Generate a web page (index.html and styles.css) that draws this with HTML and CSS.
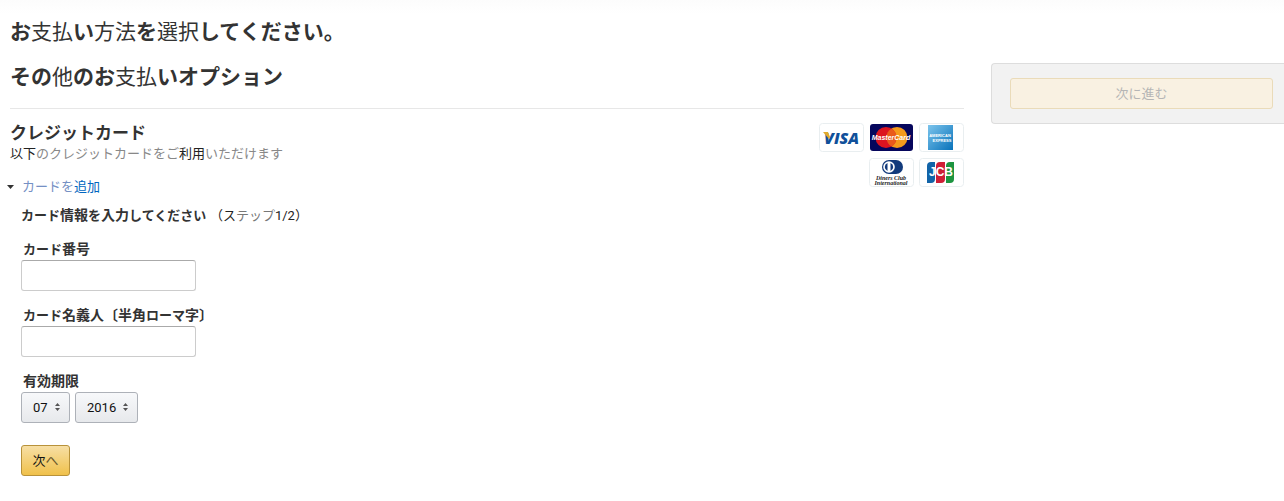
FILE: index.html
```html
<!DOCTYPE html>
<html lang="ja">
<head>
<meta charset="utf-8">
<title>お支払い方法</title>
<link rel="stylesheet" href="styles.css">
</head>
<body>
<div class="page">
  <main class="main">
    <h1 class="title">お<span class="kanji">支払</span>い<span class="kanji">方法</span>を<span class="kanji">選択</span>してください。</h1>
    <h2 class="title title-sub">その<span class="kanji">他</span>のお<span class="kanji">支払</span>いオプション</h2>
    <section class="credit">
      <header class="credit-head">
        <div class="credit-text">
          <h3 class="credit-title">クレジットカード</h3>
          <p class="note"><span class="dark">以下</span>のクレジットカードをご<span class="dark">利用</span>いただけます</p>
        </div>
        <div class="brands">
          <svg class="brand" viewBox="0 0 45 29" role="img" aria-label="VISA">
            <rect class="brand-frame" x=".5" y=".5" width="44" height="28" rx="3"/>
            <text class="visa" x="5" y="21">VISA</text>
            <path d="M4 9h5l2 5-1 2z" fill="#e0a92c"/>
          </svg>
          <svg class="brand" viewBox="0 0 45 29" role="img" aria-label="MasterCard">
            <rect x="1" y="1" width="43" height="27" rx="3" fill="#06065c"/>
            <circle cx="28" cy="14.500" r="10.500" fill="#f59a1c"/>
            <circle cx="17" cy="14.500" r="10.500" fill="#dc1420"/>
            <path d="M22.500 5.500a10.500 10.500 0 0 1 0 18a10.500 10.500 0 0 1 0-18" fill="#e95a1c"/>
            <text class="mastercard" x="22" y="17" text-anchor="middle">MasterCard</text>
          </svg>
          <svg class="brand" viewBox="0 0 45 29" role="img" aria-label="American Express">
            <defs><linearGradient id="amex" x1="0" y1="0" x2="1" y2="1"><stop offset="0" stop-color="#7cc4ec"/><stop offset="1" stop-color="#0872ba"/></linearGradient></defs>
            <rect class="brand-frame" x=".5" y=".5" width="44" height="28" rx="3"/>
            <rect x="9" y="2" width="25" height="25" fill="url(#amex)"/>
            <text class="amex" x="21" y="14" text-anchor="middle">AMERICAN</text>
            <text class="amex" x="23" y="19" text-anchor="middle">EXPRESS</text>
          </svg>
          <svg class="brand" viewBox="0 0 45 29" role="img" aria-label="Diners Club International">
            <rect class="brand-frame" x=".5" y=".5" width="44" height="28" rx="3"/>
            <path d="M20 2h7a7 7 0 0 1 0 14h-7z" fill="#123a7c"/>
            <circle cx="20" cy="9" r="7" fill="#123a7c"/>
            <circle cx="20" cy="9" r="5.800" fill="#fff"/>
            <path d="M18.500 5a4.300 4.300 0 0 0 0 8zM21.500 5a4.300 4.300 0 0 1 0 8z" fill="#123a7c"/>
            <text class="diners" x="22" y="22" text-anchor="middle">Diners Club</text>
            <text class="diners" x="22" y="27" text-anchor="middle">International</text>
          </svg>
          <svg class="brand" viewBox="0 0 45 29" role="img" aria-label="JCB">
            <rect class="brand-frame" x=".5" y=".5" width="44" height="28" rx="3"/>
            <path d="M12 4h4v17q0 4-4 4H8V8q0-4 4-4z" fill="#1264a8"/>
            <path d="M21 4h5v17q0 4-4 4h-5V8q0-4 4-4z" fill="#cf1f36"/>
            <path d="M31 4h4v17q0 4-4 4h-4V8q0-4 4-4z" fill="#1d9440"/>
            <text class="jcb" x="22" y="18" text-anchor="middle">JCB</text>
          </svg>
        </div>
      </header>
      <div class="add">
        <svg class="caret" viewBox="0 0 7 4" aria-hidden="true"><path d="M0 0h7L3.500 4z"/></svg>
        <a class="link" href="#card-form">カードを<span class="link-strong">追加</span></a>
      </div>
      <form class="form" id="card-form">
        <p class="step"><strong class="step-text">カード<span class="wide">情報</span>を<span class="wide">入力</span>してください</strong> <span>（ス<span class="faint">テップ</span><span class="digits">1/2</span>）</span></p>
        <div class="field">
          <label class="label" for="number">カード<span class="wide">番号</span></label>
          <input class="input" id="number" type="text">
        </div>
        <div class="field">
          <label class="label" for="holder">カード<span class="wide">名義人〔半角</span>ローマ<span class="wide">字〕</span></label>
          <input class="input" id="holder" type="text">
        </div>
        <div class="field">
          <label class="label" for="month"><span class="wide">有効期限</span></label>
          <div class="selects">
            <span class="select-box">
              <select class="select select-month" id="month"><option>07</option></select>
              <svg class="arrows" viewBox="0 0 5 8" aria-hidden="true"><path d="M0 3h5L2.500 0zM0 5h5L2.500 8z"/></svg>
            </span>
            <span class="select-box">
              <select class="select select-year" aria-label="年"><option>2016</option></select>
              <svg class="arrows" viewBox="0 0 5 8" aria-hidden="true"><path d="M0 3h5L2.500 0zM0 5h5L2.500 8z"/></svg>
            </span>
          </div>
        </div>
        <button class="button" type="button">次<span class="thin">へ</span></button>
      </form>
    </section>
  </main>
  <aside class="panel">
    <button class="button button-wide" type="button" disabled>次に進む</button>
  </aside>
</div>
</body>
</html>
```

FILE: styles.css
```css
* { box-sizing: border-box; }

body {
  margin: 0;
  background: linear-gradient(#fcfcfc, #fff 14px) no-repeat #fff;
  color: #222;
  font: 13px/20px "Liberation Sans", "Noto Sans CJK JP", sans-serif;
}

h1, h2, h3, p { margin: 0; }

.page {
  display: grid;
  grid-template-columns: minmax(0, 1fr) 293px;
  column-gap: 27px;
  align-items: start;
  padding-left: 10px;
}

.main { padding-top: 17px; }

.title {
  font-size: 21px;
  line-height: 30px;
  font-weight: 700;
  color: #333;
}
.title-sub { margin-top: 15px; }
.kanji { font-weight: 400; }

.credit {
  margin-top: 16px;
  padding-top: 14px;
  border-top: 1px solid #e7e7e7;
}
.credit-head {
  display: flex;
  justify-content: space-between;
  height: 54px;
}
.credit-text { padding-top: 1px; }
.credit-title {
  font-size: 17px;
  line-height: 20px;
  color: #333;
}
.note { color: #888; }
.dark { color: #222; }

.brands {
  display: flex;
  flex-wrap: wrap;
  justify-content: flex-end;
  gap: 6px 5px;
  width: 145px;
}
.brand { display: block; width: 45px; height: 29px; }
.brand-frame { fill: #fff; stroke: #e9eef0; }
.visa { font: italic 800 16px "Open Sans", sans-serif; fill: #10509a; }
.mastercard { font: italic 700 7px "Liberation Sans", sans-serif; fill: #fff; }
.amex { font: 700 4px "Liberation Sans", sans-serif; fill: #fff; }
.diners { font: italic 700 6px "Liberation Serif", serif; fill: #222; }
.jcb { font: 700 12px "Liberation Sans", sans-serif; fill: #fff; }

.add {
  display: flex;
  align-items: center;
  gap: 8px;
  margin-left: -3px;
}
.caret { width: 7px; height: 4px; fill: #333; }
.link { color: #7590c4; text-decoration: none; }
.link-strong { color: #0066c0; }

.form { padding-left: 11px; }
.step { margin-top: 8px; }
.step-text { color: #333; }
.wide { font-size: 14px; }
.faint { color: #777; }
.digits { font-family: Roboto, sans-serif; }

.field { margin-top: 14px; }
.step + .field { margin-top: 13px; }
.label {
  display: block;
  padding-left: 2px;
  line-height: 21px;
  font-weight: 700;
  color: #333;
}
.input {
  display: block;
  width: 175px;
  height: 31px;
  padding: 3px 7px;
  border: 1px solid #ccc;
  border-top-color: #aaa;
  border-radius: 3px;
  background: #fff;
  font: inherit;
}

.selects { display: flex; gap: 5px; }
.select-box { position: relative; display: block; }
.select {
  display: block;
  height: 31px;
  padding: 0 0 0 11px;
  border: 1px solid #adb1b8;
  border-radius: 3px;
  background: linear-gradient(#f7f8fa, #e7e9ec);
  color: #111;
  font: 13px Roboto, sans-serif;
  appearance: none;
}
.select-month { width: 49px; }
.select-year { width: 63px; }
.arrows {
  position: absolute;
  top: 11px;
  right: 10px;
  width: 5px;
  height: 8px;
  fill: #555;
  pointer-events: none;
}

.button {
  min-width: 49px;
  height: 31px;
  margin-top: 22px;
  padding: 0 10px;
  border: 1px solid #b8923a;
  border-radius: 3px;
  background: linear-gradient(#f7dfa5, #f0c14b);
  color: #111;
  font: inherit;
}
.thin { color: #6b5a2c; }

.panel {
  margin-top: 63px;
  padding: 14px 11px 14px 18px;
  border: 1px solid #ddd;
  border-right: 0;
  border-radius: 4px 0 0 4px;
  background: #f2f2f2;
}
.button-wide {
  display: block;
  width: 100%;
  margin: 0;
  border-color: #eadbb9;
  background: #f9f1e2;
  color: #b5b5b5;
}
```
